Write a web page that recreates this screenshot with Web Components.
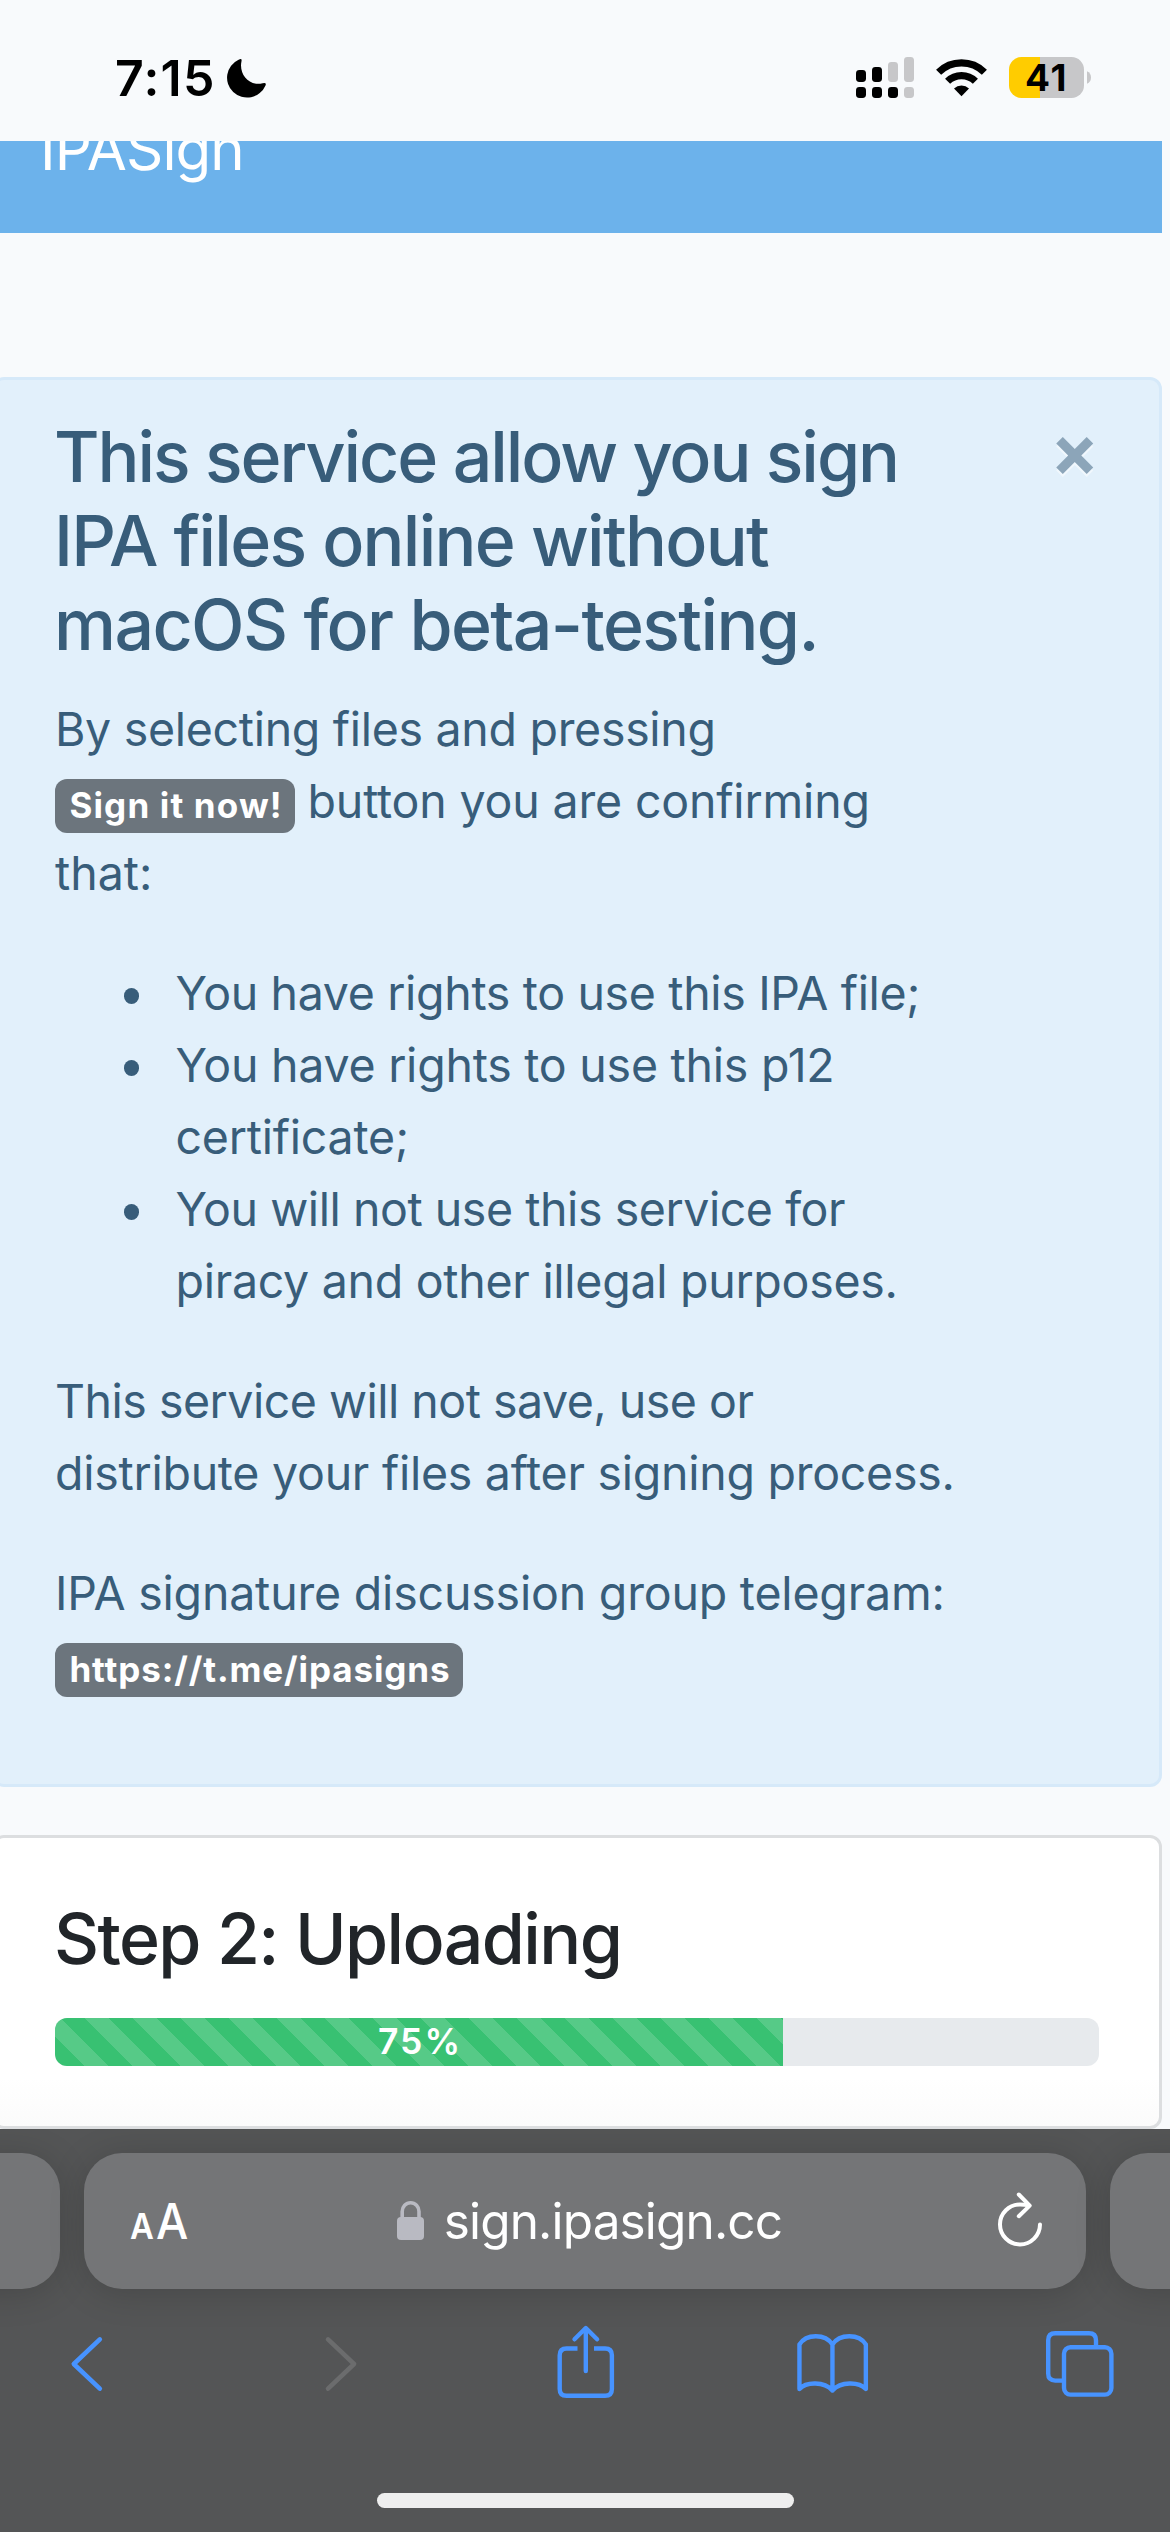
<!DOCTYPE html>
<html lang="en">
<head>
<meta charset="utf-8">
<title>IPASign</title>
<style>
html,body{margin:0;padding:0}
body{width:1170px;height:2532px;overflow:hidden;background:#f8fafc;font-family:Inter,"Liberation Sans",sans-serif;-webkit-font-smoothing:antialiased}
</style>
</head>
<body>
<phone-screen>
  <status-bar slot="status" time="7:15" battery="41"></status-bar>
  <nav-brand>IPASign</nav-brand>
  <info-alert>
    <text-line slot="title" ls="-2.07">This service allow you sign</text-line>
    <text-line slot="title" ls="-1.74">IPA files online without</text-line>
    <text-line slot="title" ls="-1.61">macOS for beta-testing.</text-line>
    <text-block>
      <text-line ls="-0.3">By selecting files and pressing</text-line>
      <text-line ls="-0.17"><tag-badge w="240" ls="1.16">Sign it now!</tag-badge>button you are confirming</text-line>
      <text-line ls="0">that:</text-line>
    </text-block>
    <bullet-list>
      <bullet-item><text-line ls="-0.34">You have rights to use this IPA file;</text-line></bullet-item>
      <bullet-item><text-line ls="-0.24">You have rights to use this p12</text-line><text-line ls="-0.22">certificate;</text-line></bullet-item>
      <bullet-item><text-line ls="-0.44">You will not use this service for</text-line><text-line ls="-0.28">piracy and other illegal purposes.</text-line></bullet-item>
    </bullet-list>
    <text-block>
      <text-line ls="-0.5">This service will not save, use or</text-line>
      <text-line ls="-0.26">distribute your files after signing process.</text-line>
    </text-block>
    <text-block>
      <text-line ls="-0.19">IPA signature discussion group telegram:</text-line>
      <text-line ls="0"><tag-badge w="408" ls="0.89">https://t.me/ipasigns</tag-badge></text-line>
    </text-block>
  </info-alert>
  <step-card heading="Step 2: Uploading"><upload-progress>75%</upload-progress></step-card>
  <browser-chrome slot="chrome" address="sign.ipasign.cc"></browser-chrome>
</phone-screen>
<script>
const define = (name, html, init) => customElements.define(name, class extends HTMLElement {
  constructor() {
    super();
    this.attachShadow({ mode: 'open' }).innerHTML = html;
  }
  connectedCallback() { if (init) init(this, this.shadowRoot); }
});

define('phone-screen', `
<style>
:host{display:flex;flex-direction:column;width:1170px;height:2532px;overflow:hidden;background:#f8fafc}
main{flex:none;height:1988px;overflow:hidden}
</style>
<slot name="status"></slot><main><slot></slot></main><slot name="chrome"></slot>`);

define('status-bar', `
<style>
:host{display:flex;flex:none;height:141px;align-items:flex-start;color:#000}
.time{margin-left:115px;width:112px;box-sizing:border-box;font-size:50px;font-weight:600;line-height:156px;letter-spacing:1.26px;white-space:nowrap}
svg{flex:none;display:block}
.moon{margin-top:56px}
.cells{margin:54px 0 0 auto}
.wifi{margin:54px 0 0 16px}
.battery{display:flex;align-items:center;margin:57px 79px 0 19px}
.body{width:75px;height:41px;border-radius:12.5px;background:linear-gradient(90deg,#fc0 31px,#c7c7c9 31px);font-size:37px;font-weight:700;line-height:41px;letter-spacing:2px;text-indent:16px;white-space:nowrap}
</style>
<span class="time"></span>
<svg class="moon" width="46" height="46" viewBox="227 56 46 46"><path d="M238.6 59.8Q242.2 57.7 241.5 61.2C238.6 74 249 86.6 262.6 83.3Q266.8 82.2 265.5 85.4A20 19.8 0 1 1 238.6 59.8Z"/></svg>
<svg class="cells" width="64" height="48" viewBox="854 54 64 48">
<g><rect x="856" y="70" width="10" height="12" rx="3.4"/><rect x="872" y="67" width="10" height="15" rx="3.4"/><rect x="856" y="87" width="10" height="11" rx="3.4"/><rect x="872" y="87" width="10" height="11" rx="3.4"/><rect x="888" y="87" width="10" height="11" rx="3.4"/></g>
<g fill="#c7c7c9"><rect x="888" y="62" width="10" height="20" rx="3.4"/><rect x="904" y="57" width="10" height="25" rx="3.4"/><rect x="904" y="87" width="10" height="11" rx="3.4"/></g></svg>
<svg class="wifi" width="56" height="48" viewBox="934 54 56 48">
<g fill="none" stroke="#000" stroke-width="7.2"><path d="M938.6 72.2A32.6 32.6 0 0 1 984.4 72.2"/><path d="M947.6 81.3A19.8 19.8 0 0 1 975.4 81.3"/></g>
<path d="M961.5 96.2L954 88.6A10.7 10.7 0 0 1 969 88.6Z"/></svg>
<div class="battery"><div class="body"></div><svg width="7" height="13" viewBox="1084 71.5 7 13"><path d="M1087 71.8V84.2Q1091 82.4 1091 78T1087 71.8Z" fill="#c7c7c9"/></svg></div>`,
(h, r) => {
  r.querySelector('.time').textContent = h.getAttribute('time');
  r.querySelector('.body').textContent = h.getAttribute('battery');
});

define('nav-brand', `
<style>
:host{display:block;width:1162px;height:92px;overflow:hidden;background:#6cb2eb;color:#fff}
span{display:block;margin:-37px 0 0 40px;font-size:58.2px;line-height:90px;letter-spacing:-.9px}
</style><span><slot></slot></span>`);

define('text-line', `
<style>:host{display:flex;align-items:flex-start;white-space:nowrap}</style><slot></slot>`,
h => { h.style.letterSpacing = h.getAttribute('ls') + 'px'; });

define('text-block', `
<style>:host{display:block;margin-bottom:48px}</style><slot></slot>`);

define('tag-badge', `
<style>
:host{display:block;flex:none;box-sizing:border-box;height:54px;margin:14px 12.5px 0 0;padding-left:14.4px;border-radius:12px;background:#6c757d;color:#fff;font-size:35px;font-weight:700;line-height:53px}
</style><slot></slot>`,
h => { h.style.width = h.getAttribute('w') + 'px'; h.style.letterSpacing = h.getAttribute('ls') + 'px'; });

define('bullet-list', `
<style>:host{display:block;margin:0 0 48px;padding-left:75px}</style><slot></slot>`);

define('bullet-item', `
<style>
:host{display:flex}
i{flex:none;width:15.5px;height:15.5px;margin:31px 36.5px 0 -6.5px;border-radius:50%;background:#385d7a}
</style><i></i><div><slot></slot></div>`);

define('info-alert', `
<style>
:host{display:flex;justify-content:space-between;box-sizing:border-box;width:1170px;height:1410px;margin:144px 0 0 -8px;padding:35px 60px 0;border:3px solid #d6e9f9;border-radius:12px;background:#e2f0fb;color:#385d7a;font-size:46.5px;line-height:72px}
h4{margin:0 0 26px -1px;font-size:69.8px;font-weight:500;line-height:84px}
button{all:unset;flex:none;align-self:flex-start;font-size:72px;font-weight:700;line-height:69px;color:#385d7a;text-shadow:0 3px 0 #fff;opacity:.5}
</style>
<div><h4><slot name="title"></slot></h4><slot></slot></div>
<button aria-label="Close">×</button>`);

define('step-card', `
<style>
:host{display:block;box-sizing:border-box;width:1170px;height:294px;margin:48px 0 0 -8px;padding:59px 60px 0;border:3px solid #dcdee0;border-radius:12px;background:linear-gradient(#fff 240px,#fbfbfb);color:#212529}
h4{margin:0 0 37px -1px;font-size:69.8px;font-weight:500;line-height:84px;letter-spacing:-1.6px;white-space:nowrap}
</style><h4></h4><slot></slot>`,
(h, r) => { r.querySelector('h4').textContent = h.getAttribute('heading'); });

define('upload-progress', `
<style>
:host{display:flex;height:48px;border-radius:12px;overflow:hidden;background:#e7eaed}
div{width:728px;box-sizing:border-box;padding-left:2px;text-align:center;color:#fff;font-size:35.5px;font-weight:600;line-height:47px;letter-spacing:2px;background:linear-gradient(45deg,rgba(255,255,255,.15) 25%,transparent 25%,transparent 50%,rgba(255,255,255,.15) 50%,rgba(255,255,255,.15) 75%,transparent 75%) 30px 0/48px 48px #38c172}
</style><div><slot></slot></div>`);

define('browser-chrome', `
<style>
:host{display:flex;flex-direction:column;flex:none;height:403px;overflow:hidden;background:#545556;color:#fff}
.tabs{display:flex;justify-content:center;gap:24px;padding-top:24px}
.pill{flex:none;box-sizing:border-box;width:1002px;height:136px;border-radius:38px;background:#747577;box-shadow:0 4px 36px rgba(0,0,0,.16)}
.main{display:grid;grid-template-columns:1fr auto 1fr;align-items:center;padding:0 42px 0 46px}
.size{display:flex;align-items:baseline;gap:4px;font-weight:500;line-height:136px;height:136px}
.size span{display:block;transform-origin:0 50%;transform:scaleX(.91)}
.s{font-size:36px;font-weight:600;width:22px}.l{font-size:50px;width:30px}
.addr{display:flex;align-items:flex-start;height:136px;padding-left:4px}
.addr svg{margin-top:46px}
.addr span{margin-left:19px;font-size:49.5px;line-height:136px;letter-spacing:-.84px}
svg{display:block;flex:none}
.reload{justify-self:end}
.tools{display:flex;justify-content:space-between;margin:35px 50px 0 47px;color:#4793ff}
.home{flex:none;width:417px;height:15px;margin:89px auto 0;border-radius:8px;background:#eee}
</style>
<div class="tabs">
<div class="pill"></div>
<div class="pill main">
<div class="size"><span class="s">A</span><span class="l">A</span></div>
<div class="addr"><svg width="29" height="44" viewBox="395 2199 29 44"><path d="M401.2 2220V2211.5a8.4 8.8 0 0 1 16.8 0V2220" fill="none" stroke="#b9bac2" stroke-width="3.6"/><rect x="396" y="2217" width="27" height="23" rx="4" fill="#b9bac2"/></svg><span></span></div>
<svg class="reload" width="48" height="60" viewBox="996 2191 48 60" fill="none" stroke="#fff" stroke-width="4" stroke-linecap="round" stroke-linejoin="round"><path d="M1040 2224.5A20 20 0 1 1 1020 2204.4Q1025 2204.4 1028.5 2205.2"/><path d="M1018.8 2194.5L1029.7 2205.6L1018.8 2216.2"/></svg>
</div>
<div class="pill"></div>
</div>
<div class="tools">
<svg width="80" height="80" viewBox="47 2324 80 80" fill="none" stroke="currentColor" stroke-width="4.6" stroke-linecap="round" stroke-linejoin="round"><path d="M99.8 2339.4L73.8 2364L99.8 2388.6"/></svg>
<svg width="80" height="80" viewBox="295.25 2324 80 80" fill="none" stroke="#6b6c6d" stroke-width="4.6" stroke-linecap="round" stroke-linejoin="round"><path d="M328.3 2339.4L354.3 2364L328.3 2388.6"/></svg>
<svg width="80" height="80" viewBox="543.5 2324 80 80" fill="none" stroke="currentColor" stroke-width="4.4"><path d="M577 2348.5H566Q559.2 2348.5 559.2 2355.3V2389Q559.2 2395.8 566 2395.8H604.6Q611.4 2395.8 611.4 2389V2355.3Q611.4 2348.5 604.6 2348.5H593.5"/><path d="M585.3 2371V2328.5M574 2339.3L585.3 2328L596.6 2339.3" stroke-linecap="round" stroke-linejoin="round"/></svg>
<svg width="80" height="80" viewBox="791.75 2324 80 80" fill="none" stroke="currentColor" stroke-width="4.4" stroke-linecap="round" stroke-linejoin="round"><path d="M832.2 2344.5C825 2333.5 806 2333.5 799.2 2344.5V2389C806 2381.5 824 2381.5 832.2 2390.5C840.4 2381.5 858.6 2381.5 865.6 2389V2344.5C858.8 2333.5 839.4 2333.5 832.2 2344.5V2390.5"/></svg>
<svg width="80" height="80" viewBox="1040 2324 80 80" fill="none" stroke="currentColor" stroke-width="4.4"><rect x="1064" y="2347.2" width="47.4" height="47.4" rx="6.5"/><path d="M1096 2346V2340.3Q1096 2333.3 1089 2333.3H1055.2Q1048.2 2333.3 1048.2 2340.3V2373.6Q1048.2 2380.6 1055.2 2380.6H1063"/></svg>
</div>
<div class="home"></div>`,
(h, r) => { r.querySelector('.addr span').textContent = h.getAttribute('address'); });
</script>
</body>
</html>
